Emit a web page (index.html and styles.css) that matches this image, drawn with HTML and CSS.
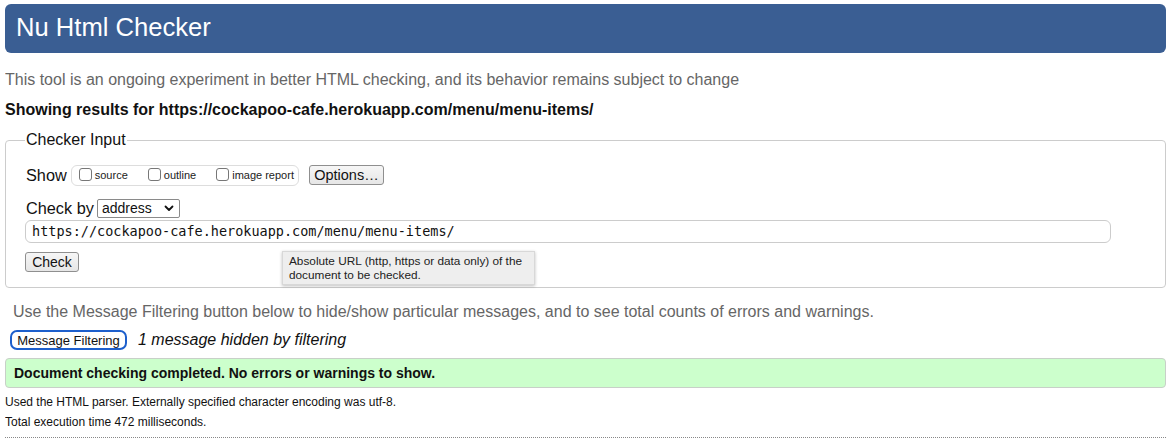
FILE: index.html
```html
<!DOCTYPE html>
<html lang="en">
<head>
<meta charset="utf-8">
<title>Nu Html Checker</title>
<link rel="stylesheet" href="styles.css">
</head>
<body>
<h1 class="title">Nu Html Checker</h1>
<p class="intro">This tool is an ongoing experiment in better HTML checking, and its behavior remains subject to change</p>
<p class="showing">Showing results for https://cockapoo-cafe.herokuapp.com/menu/menu-items/</p>
<fieldset class="checker">
  <legend class="legend">Checker Input</legend>
  <div class="show-row">
    <span class="row-label">Show</span>
    <span class="opts">
      <label class="opt"><span class="cb"></span>source</label>
      <label class="opt"><span class="cb"></span>outline</label>
      <label class="opt"><span class="cb"></span>image report</label>
    </span>
    <span class="btn btn-options">Options…</span>
  </div>
  <div class="by-row">
    <span class="row-label">Check by</span>
    <span class="select">address<svg class="chev" width="10" height="7" viewBox="0 0 10 7"><path d="M1.5 1.5 L5 5 L8.5 1.5" fill="none" stroke="#111" stroke-width="1.8" stroke-linecap="round" stroke-linejoin="round"/></svg></span>
  </div>
  <div class="url">https://cockapoo-cafe.herokuapp.com/menu/menu-items/</div>
  <div class="check-row">
    <span class="btn btn-check">Check</span>
    <div class="tooltip">Absolute URL (http, https or data only) of the<br>document to be checked.</div>
  </div>
</fieldset>
<p class="filter-note">Use the Message Filtering button below to hide/show particular messages, and to see total counts of errors and warnings.</p>
<div class="filter-row">
  <span class="btn btn-filter">Message Filtering</span>
  <em class="hidden-note">1 message hidden by filtering</em>
</div>
<div class="success">Document checking completed. No errors or warnings to show.</div>
<p class="stat">Used the HTML parser. Externally specified character encoding was utf-8.</p>
<p class="stat">Total execution time 472 milliseconds.</p>
<div class="rule"></div>
</body>
</html>
```
FILE: styles.css
```css
html, body {
  background: #fff;
}
body {
  margin: 4px 6px 0 5px;
  font-family: "Liberation Sans", Arial, Helvetica, sans-serif;
  color: #111;
}
.title {
  margin: 0;
  height: 49px;
  line-height: 47px;
  padding-left: 11px;
  background: #3a5e93;
  color: #fff;
  font-size: 25.6px;
  font-weight: normal;
  border-radius: 6px;
}
.intro {
  margin: 18px 0 0 0;
  font-size: 16px;
  line-height: 18px;
  color: #666;
}
.showing {
  margin: 12px 0 0 0;
  font-size: 16px;
  line-height: 18px;
  font-weight: bold;
  color: #111;
}
.checker {
  margin: 12px 0 0 0;
  padding: 10px 18px 13px 19px;
  border: 1px solid #ccc;
  border-radius: 4px;
  min-width: 0;
}
.legend {
  font-size: 16px;
  padding: 0 1px;
  margin-left: 0;
  color: #111;
}
.show-row {
  display: flex;
  align-items: center;
  height: 22px;
  margin-top: 5px;
}
.row-label {
  font-size: 16.3px;
  color: #111;
  margin-left: 1px;
}
.opts {
  display: flex;
  align-items: center;
  margin-left: 4px;
  height: 19px;
  padding: 0 4px 0 7px;
  border: 1px solid #ddd;
  border-radius: 6px;
}
.opt {
  display: flex;
  align-items: center;
  font-size: 11px;
  color: #222;
  margin-right: 20px;
}
.opt:last-child {
  margin-right: 0;
}
.cb {
  display: inline-block;
  width: 11px;
  height: 11px;
  border: 1px solid #777;
  border-radius: 3px;
  margin-right: 3px;
  margin-top: -2px;
  background: #fff;
}
.btn {
  display: inline-flex;
  align-items: center;
  justify-content: center;
  box-sizing: border-box;
  border: 1px solid #8f8f8f;
  border-radius: 3px;
  background: linear-gradient(#f6f6f6, #e6e6e6);
  color: #111;
  font-size: 14px;
}
.btn-options {
  margin-left: 10px;
  width: 75px;
  height: 20px;
  font-size: 14.5px;
}
.by-row {
  display: flex;
  align-items: center;
  margin-top: 12px;
  height: 20px;
}
.select {
  display: inline-flex;
  align-items: center;
  justify-content: space-between;
  box-sizing: border-box;
  margin-left: 3px;
  width: 83px;
  height: 19px;
  padding: 0 5px 0 4px;
  border: 1px solid #8a8a8a;
  border-radius: 2px;
  font-size: 14px;
  color: #111;
  background: #fff;
}
.url {
  margin-top: 2px;
  box-sizing: border-box;
  width: 1086px;
  height: 23px;
  line-height: 21px;
  padding-left: 6px;
  border: 1px solid #ccc;
  border-radius: 6px;
  font-family: "DejaVu Sans Mono", "Liberation Mono", monospace;
  font-size: 13.5px;
  color: #111;
}
.check-row {
  position: relative;
  height: 22px;
  margin-top: 9px;
}
.btn-check {
  width: 54px;
  height: 20px;
  font-size: 14px;
}
.tooltip {
  position: absolute;
  left: 257px;
  top: -1px;
  width: 253px;
  box-sizing: border-box;
  padding: 2px 6px 2px 6px;
  background: #eeeeee;
  border: 1px solid #d8d8d8;
  box-shadow: 0 1px 3px rgba(0,0,0,0.25);
  font-size: 11.8px;
  line-height: 14px;
  color: #222;
  white-space: nowrap;
}
.filter-note {
  margin: 15px 0 0 8px;
  font-size: 16px;
  line-height: 18px;
  color: #666;
}
.filter-row {
  display: flex;
  align-items: center;
  margin: 9px 0 0 5px;
  height: 20px;
}
.btn-filter {
  width: 117px;
  height: 20px;
  border: 2px solid #1d5fcc;
  border-radius: 7px;
  background: #fff;
  font-size: 13px;
}
.hidden-note {
  margin-left: 11px;
  font-size: 16px;
  color: #111;
}
.success {
  margin-top: 8px;
  box-sizing: border-box;
  height: 30px;
  line-height: 28px;
  padding-left: 8px;
  background: #ccffcc;
  border: 1px solid #c8d0c8;
  border-radius: 4px;
  font-size: 14px;
  font-weight: bold;
  color: #111;
}
.stat {
  margin: 7px 0 0 0;
  font-size: 12px;
  line-height: 14px;
  color: #111;
}
.stat + .stat {
  margin-top: 6px;
}
.rule {
  margin-top: 8px;
  border-top: 1px dotted #888;
}
```
